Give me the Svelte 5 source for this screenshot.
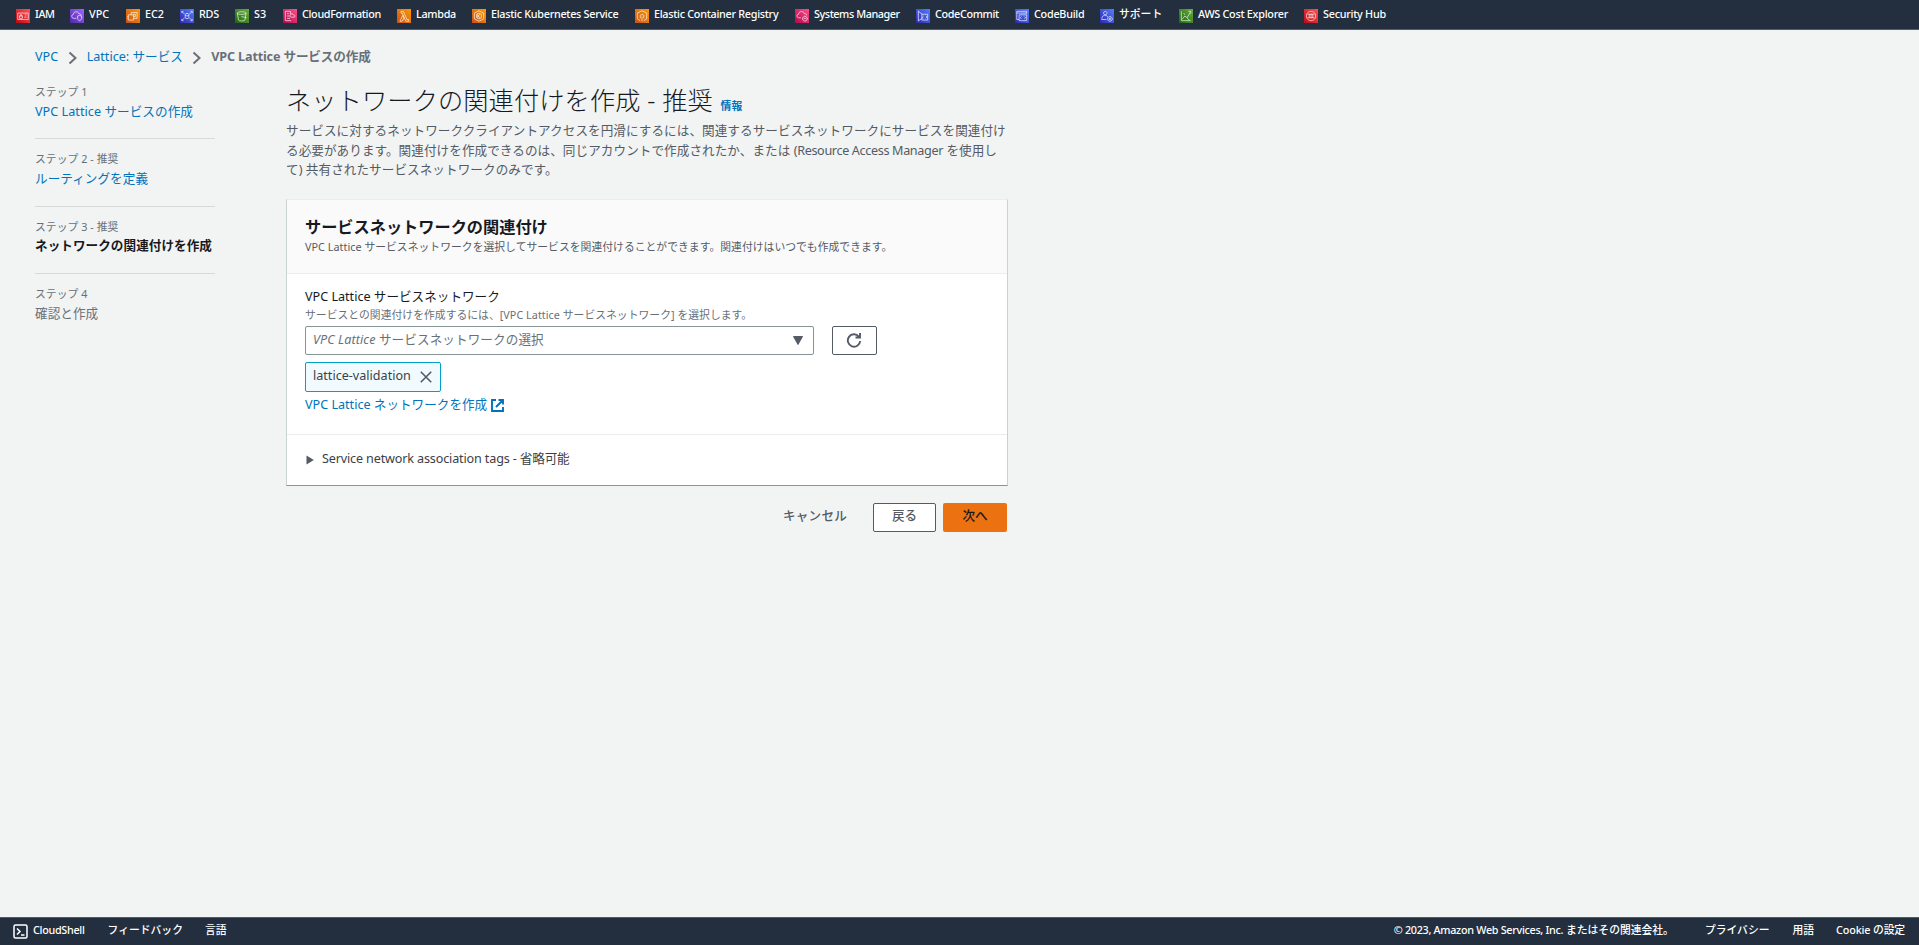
<script lang="ts">
    // label, gradient, slot width, label tracking, icon path (24 x 24 grid)
    const services = [
        { name: "IAM", color: "red", width: 54, space: -0.4, icon: "M3 7h18v11H3zM6 12h5v4H6zM7 12v-2h3v2M15 10h3M14 14h4" },
        { name: "VPC", color: "purple", width: 56, space: 0, icon: "M11 16H7a3.5 3.5 0 0 1-1-7c0-5 8-6 9-1 3 0 4 1 4 3M13 12l3-1 4 1v4c0 2-2 3-3.500 4-2-1-3.500-2-3.500-4z" },
        { name: "EC2", color: "orange", width: 54, space: 0, icon: "M4 10h9v9H4zM9 10V6h10v10h-6M12 9h4v4h-3M4 13H2M4 16H2" },
        { name: "RDS", color: "blue", width: 55, space: -0.2, icon: "M3 7V4h3M18 4h3v3M3 17v3h3M18 20h3v-3M4 5l4 4M20 5l-4 4M4 19l4-4M20 19l-4-4M9 9c0-2 6-2 6 0v6c0 2-6 2-6 0zM9 11c2 1 4 1 6 0" },
        { name: "S3", color: "green", width: 48, space: 0, icon: "M4 7c0-3 15-3 15 0l-2 12c-1 2-10 2-11 0zM4 7c0 3 15 3 15 0M11 13l9 2" },
        { name: "CloudFormation", color: "pink", width: 114, space: -0.33, icon: "M14 20H4V4h9v5M7 8h3M7 12h4M7 16h5M14 14h5c3-1 1-4-1-4-1-3-5-2-5 0-2 1-1 4 1 4z" },
        { name: "Lambda", color: "orange", width: 75, space: -0.3, icon: "M7 4h4l6 14h3v3h-5L9 7H7zM10 11l-5 10h4l3-6z" },
        { name: "Elastic Kubernetes Service", color: "orange", width: 163, space: -0.28, icon: "M12 3l8 4v10l-8 4-8-4V7zM8 9l4-2 4 2v6l-4 2-4-2zM10 9v6M10 12l4-3M10 12l4 3" },
        { name: "Elastic Container Registry", color: "orange", width: 160, space: -0.28, icon: "M9 20l-5-3V7l8-4 8 4v10l-5 3M12 21v-8M9 16v-5l3-2 3 2v5" },
        { name: "Systems Manager", color: "pink", width: 121, space: -0.42, icon: "M10 15H6c-4-1-3-6 0-6 1-6 9-6 10-1 3 0 4 1 4 3M17 12l4 3v3l-4 3-4-3v-3zM15 16h4" },
        { name: "CodeCommit", color: "blue", width: 99, space: -0.35, icon: "M4 3v18M4 4l7 5M4 20l7-4M10 9h10v10H10zM13 12l-2 2 2 2M17 12l2 2-2 2" },
        { name: "CodeBuild", color: "blue", width: 85, space: -0.25, icon: "M3 10V4h17v4M3 7h17M7 10h13v10H7zM11 13l-2 2 2 2M16 13l2 2-2 2M3 10v8h4" },
        { name: "サポート", color: "blue", width: 79, space: 0, icon: "M9 4a3 3 0 1 0 .1 0M3 18c0-9 9-9 10-4M3 18h8M17 13a4 4 0 1 0 .1 0M17 15v4M15 17h4" },
        { name: "AWS Cost Explorer", color: "green", width: 125, space: -0.26, icon: "M4 4v16h16M5 18l5-6 4 3 5-9M8 7l2 3M14 16l4 3M16 4h4v4" },
        { name: "Security Hub", color: "red", width: 90, space: -0.25, icon: "M12 4a8 8 0 1 0 .1 0M6 9h12M6 15h12M12 8v8M9 9v6M15 9v6" },
    ];

    const steps = [
        { label: "ステップ 1", title: "VPC Lattice サービスの作成", state: "link" },
        { label: "ステップ 2 - 推奨", title: "ルーティングを定義", state: "link" },
        { label: "ステップ 3 - 推奨", title: "ネットワークの関連付けを作成", state: "active" },
        { label: "ステップ 4", title: "確認と作成", state: "pending" },
    ];

    let tokens = $state(["lattice-validation"]);

    function removeToken(token: string) {
        tokens = tokens.filter((t) => t !== token);
    }
</script>

<div class="page">
    <header>
        {#each services as service}
            <a class="service" href="#top" style:width="{service.width}px">
                <svg class="service-icon {service.color}" viewBox="0 0 24 24"><path d={service.icon} /></svg>
                <span style:letter-spacing="{service.space}px">{service.name}</span>
            </a>
        {/each}
    </header>

    <nav class="breadcrumb">
        <a href="#vpc">VPC</a>
        <svg viewBox="0 0 10 14"><path d="M1.500 1.500L7.500 7l-6 5.500" /></svg>
        <a href="#lattice">Lattice: サービス</a>
        <svg viewBox="0 0 10 14"><path d="M1.500 1.500L7.500 7l-6 5.500" /></svg>
        <b>VPC Lattice サービスの作成</b>
    </nav>

    <div class="content">
        <aside>
            {#each steps as step}
                <div class="step">
                    <small>{step.label}</small>
                    <span class={step.state}>{step.title}</span>
                </div>
            {/each}
        </aside>

        <main>
            <h1>ネットワークの関連付けを作成 - 推奨 <a href="#info">情報</a></h1>
            <p class="intro">
                サービスに対するネットワーククライアントアクセスを円滑にするには、関連するサービスネットワークにサービスを関連付け<br />る必要があります。関連付けを作成できるのは、同じアカウントで作成されたか、または
                <span class="latin">(Resource Access Manager</span> を使用し<br />て) 共有されたサービスネットワークのみです。
            </p>

            <section class="card">
                <div class="card-header">
                    <h2>サービスネットワークの関連付け</h2>
                    <p>VPC Lattice サービスネットワークを選択してサービスを関連付けることができます。関連付けはいつでも作成できます。</p>
                </div>
                <div class="card-body">
                    <div class="label">VPC Lattice サービスネットワーク</div>
                    <div class="hint">サービスとの関連付けを作成するには、[VPC Lattice サービスネットワーク] を選択します。</div>
                    <div class="row">
                        <div class="select">
                            <span><i>VPC Lattice</i> サービスネットワークの選択</span>
                            <svg viewBox="0 0 10 9"><path d="M.5.5h9L5 8.500z" /></svg>
                        </div>
                        <button class="refresh" aria-label="更新">
                            <svg viewBox="0 0 16 16"><path d="M12.800 4.500A6.200 6.200 0 1 0 14.200 9M14 1v4.500H9.500" /></svg>
                        </button>
                    </div>
                    {#each tokens as token}
                        <div class="token">
                            <span>{token}</span>
                            <button aria-label="削除" onclick={() => removeToken(token)}>
                                <svg viewBox="0 0 12 12"><path d="M.8.8l10.400 10.400M11.200.8L.8 11.200" /></svg>
                            </button>
                        </div>
                    {/each}
                    <a class="create" href="#create">
                        VPC Lattice ネットワークを作成
                        <svg viewBox="0 0 13 13"><path d="M5 1H1v11h11V8M7.500 1H12v4.500M12 1L5 8" /></svg>
                    </a>
                </div>
                <div class="tags">
                    <svg viewBox="0 0 8 10"><path d="M.5.5L7.800 5 .5 9.500z" /></svg>
                    <span>Service network association tags - 省略可能</span>
                </div>
            </section>

            <div class="actions">
                <button class="cancel">キャンセル</button>
                <button class="back">戻る</button>
                <button class="next">次へ</button>
            </div>
        </main>
    </div>

    <footer>
        <svg viewBox="0 0 15 15"><rect x="1" y="1" width="13" height="13" rx="1.500" /><path d="M4 4.500L7 7.500l-3 3M8 11h3.500" /></svg>
        <span class="shell">CloudShell</span>
        <span class="feedback">フィードバック</span>
        <span>言語</span>
        <span class="copyright"><span class="owner">© 2023, Amazon Web Services, Inc.</span> またはその関連会社。</span>
        <span class="privacy">プライバシー</span>
        <span class="terms">用語</span>
        <span class="cookie">Cookie の設定</span>
    </footer>
</div>

<style>
    :global(body) {
        margin: 0;
        background: #f2f3f3;
    }
    .page {
        display: flex;
        flex-direction: column;
        height: 945px;
        font-family: "Noto Sans", "Noto Sans CJK JP", sans-serif;
        font-size: 12.6px;
        line-height: 19.8px;
        color: #16191f;
        white-space: nowrap;
        overflow: hidden;
    }
    a {
        color: #0073bb;
        text-decoration: none;
    }
    button {
        font: inherit;
        box-sizing: border-box;
        padding: 0;
        cursor: pointer;
    }
    svg {
        fill: none;
        stroke: currentColor;
        flex: none;
    }

    header {
        display: flex;
        align-items: center;
        box-sizing: border-box;
        height: 30px;
        flex: none;
        padding-left: 16px;
        background: #232f3e;
        border-bottom: 1px solid #545b64;
    }
    .service {
        display: flex;
        flex: none;
        gap: 5px;
        color: #fff;
        font-size: 10.8px;
        font-weight: 500;
    }
    .service span {
        line-height: 14px;
    }
    .service-icon {
        width: 14px;
        height: 14px;
        margin-top: 2px;
        stroke-width: 1.3;
        color: rgba(255, 255, 255, 0.85);
    }
    .red { background: linear-gradient(45deg, #bd0816, #ff5252); }
    .purple { background: linear-gradient(45deg, #4d27a8, #a166ff); }
    .orange { background: linear-gradient(45deg, #c8511b, #ff9900); }
    .blue { background: linear-gradient(45deg, #2e27ad, #527fff); }
    .green { background: linear-gradient(45deg, #1b660f, #6cae3e); }
    .pink { background: linear-gradient(45deg, #b0084d, #ff4f8b); }

    .breadcrumb {
        display: flex;
        align-items: center;
        height: 20px;
        margin: 17px 0 0 35px;
    }
    .breadcrumb svg {
        width: 10px;
        height: 14px;
        margin: 2px 9px 0 9.5px;
        color: #687078;
        stroke-width: 2;
    }
    .breadcrumb b {
        color: #687078;
        letter-spacing: -0.15px;
    }

    .content {
        display: flex;
        flex: 1;
        padding: 15px 0 0 35px;
    }
    aside {
        width: 180px;
        margin-right: 71px;
    }
    .step {
        display: flex;
        flex-direction: column;
        box-sizing: border-box;
        height: 67.5px;
        padding-top: 10px;
        border-bottom: 1px solid #d5dbdb;
    }
    .step:first-child {
        height: 57px;
        padding-top: 0;
    }
    .step:last-child {
        border-bottom: 0;
    }
    small {
        font-size: 10.8px;
        letter-spacing: 0.05px;
        color: #687078;
    }
    .step span {
        letter-spacing: 0.05px;
    }
    .link { color: #0073bb; }
    .active { font-weight: 700; }
    .pending { color: #687078; }

    main {
        width: 721px;
    }
    h1 {
        margin: 2px 0 0;
        font-size: 25.2px;
        font-weight: 300;
        line-height: 32px;
        letter-spacing: 0.14px;
    }
    h1 a {
        margin-left: 1px;
        font-size: 10.8px;
        font-weight: 700;
    }
    .intro {
        margin: -1px 0 19px;
        color: #545b64;
        line-height: 19.6px;
        letter-spacing: 0.06px;
    }
    .latin {
        letter-spacing: -0.34px;
    }

    .card {
        box-sizing: border-box;
        width: 722px;
        height: 287px;
        background: #fff;
        border: 1px solid #cbd2d2;
        border-top-color: #eaeded;
        border-bottom-color: #879596;
    }
    .card-header {
        box-sizing: border-box;
        height: 74px;
        padding: 17px 18px 0;
        background: #fafafa;
        border-bottom: 1px solid #eaeded;
    }
    h2 {
        margin: 0;
        font-size: 16.2px;
        line-height: 20px;
    }
    .card-header p {
        margin: 0;
        font-size: 10.8px;
        letter-spacing: 0.03px;
        color: #545b64;
    }
    .card-body {
        box-sizing: border-box;
        height: 161px;
        padding: 13px 18px 0;
        border-bottom: 1px solid #eaeded;
    }
    .hint {
        height: 19px;
        line-height: 15px;
        font-size: 10.8px;
        letter-spacing: 0.03px;
        color: #687078;
    }
    .row {
        display: flex;
        gap: 18px;
    }
    .select {
        display: flex;
        align-items: center;
        justify-content: space-between;
        box-sizing: border-box;
        width: 509px;
        height: 29px;
        padding: 0 10px 0 7px;
        border: 1px solid #879596;
        border-radius: 2px;
        color: #687078;
    }
    .select span {
        letter-spacing: 0.09px;
        margin-top: -1px;
    }
    .select svg {
        width: 10px;
        height: 9px;
        fill: #545b64;
        color: #545b64;
    }
    .refresh {
        display: flex;
        align-items: center;
        justify-content: center;
        width: 45px;
        height: 29px;
        padding-right: 1px;
        background: #fff;
        border: 1px solid #545b64;
        border-radius: 2px;
        color: #545b64;
    }
    .refresh svg {
        width: 16px;
        height: 16px;
        stroke-width: 1.9;
    }
    .token {
        display: flex;
        justify-content: space-between;
        box-sizing: border-box;
        width: 136px;
        height: 30px;
        margin-top: 7px;
        padding: 3px 8px 0 7px;
        background: #f1faff;
        border: 1px solid #00a1c9;
        border-radius: 2px;
        color: #3b4048;
    }
    .token button {
        display: flex;
        align-items: center;
        height: 23px;
        background: none;
        border: 0;
        color: #545b64;
    }
    .token svg {
        width: 12px;
        height: 12px;
        stroke-width: 1.6;
    }
    .create {
        display: flex;
        align-items: center;
        gap: 4px;
        margin-top: 3px;
    }
    .create svg {
        width: 13px;
        height: 13px;
        margin-top: 2px;
        stroke-width: 1.9;
    }
    .tags {
        display: flex;
        align-items: center;
        height: 49px;
        padding-left: 19px;
        gap: 8px;
        color: #3b4048;
        letter-spacing: -0.15px;
    }
    .tags svg {
        width: 8px;
        height: 10px;
        margin-top: 2px;
        fill: #545b64;
        stroke: none;
    }

    .actions {
        display: flex;
        justify-content: flex-end;
        margin-top: 17px;
        font-weight: 500;
    }
    .actions button {
        height: 29px;
        padding-bottom: 2px;
        border-radius: 2px;
        color: #545b64;
    }
    .actions .cancel {
        background: none;
        border: 0;
        margin-right: 26px;
        letter-spacing: 0.2px;
    }
    .back {
        width: 63px;
        margin-right: 7px;
        background: #fff;
        border: 1px solid #545b64;
    }
    .actions .next {
        width: 64px;
        background: #ec7211;
        border: 0;
        color: #16191f;
    }

    footer {
        display: flex;
        align-items: center;
        box-sizing: border-box;
        height: 28px;
        flex: none;
        padding: 0 14px 3px 13px;
        background: #232f3e;
        border-top: 1px solid #545b64;
        color: #fff;
        font-size: 10.8px;
        font-weight: 500;
    }
    footer svg {
        width: 15px;
        height: 15px;
        margin: 3px 5px 0 0;
        stroke-width: 1.5;
    }
    .shell, .owner {
        letter-spacing: -0.3px;
    }
    .cookie {
        letter-spacing: -0.15px;
    }
    .shell {
        margin-right: 23px;
    }
    .feedback, .terms {
        margin-right: 22px;
    }
    .copyright {
        margin: 0 31px 0 auto;
    }
    .privacy {
        margin-right: 23px;
    }
</style>
